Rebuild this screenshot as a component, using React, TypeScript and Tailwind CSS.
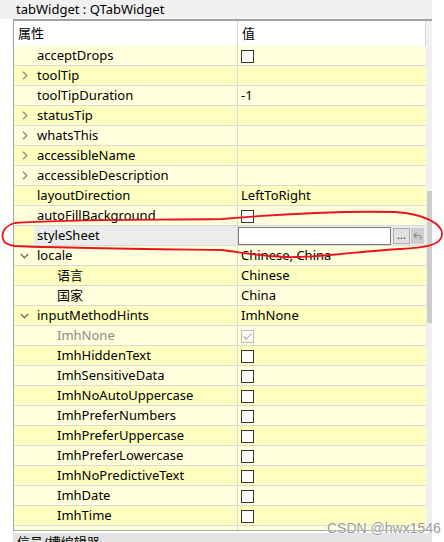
import React from "react";

type Row = {
  name: string;
  depth: number;
  arrow?: "right" | "down";
  value?: string;
  check?: "empty" | "disabled";
  special?: "style";
  muted?: boolean;
};

const rows: Row[] = [
  { name: "acceptDrops", depth: 0, check: "empty" },
  { name: "toolTip", depth: 0, arrow: "right" },
  { name: "toolTipDuration", depth: 0, value: "-1" },
  { name: "statusTip", depth: 0, arrow: "right" },
  { name: "whatsThis", depth: 0, arrow: "right" },
  { name: "accessibleName", depth: 0, arrow: "right" },
  { name: "accessibleDescription", depth: 0, arrow: "right" },
  { name: "layoutDirection", depth: 0, value: "LeftToRight" },
  { name: "autoFillBackground", depth: 0, check: "empty" },
  { name: "styleSheet", depth: 0, special: "style" },
  { name: "locale", depth: 0, arrow: "down", value: "Chinese, China" },
  { name: "语言", depth: 1, value: "Chinese" },
  { name: "国家", depth: 1, value: "China" },
  { name: "inputMethodHints", depth: 0, arrow: "down", value: "ImhNone" },
  { name: "ImhNone", depth: 1, check: "disabled", muted: true },
  { name: "ImhHiddenText", depth: 1, check: "empty" },
  { name: "ImhSensitiveData", depth: 1, check: "empty" },
  { name: "ImhNoAutoUppercase", depth: 1, check: "empty" },
  { name: "ImhPreferNumbers", depth: 1, check: "empty" },
  { name: "ImhPreferUppercase", depth: 1, check: "empty" },
  { name: "ImhPreferLowercase", depth: 1, check: "empty" },
  { name: "ImhNoPredictiveText", depth: 1, check: "empty" },
  { name: "ImhDate", depth: 1, check: "empty" },
  { name: "ImhTime", depth: 1, check: "empty" },
];

function Chevron({ dir }: { dir: "right" | "down" }) {
  if (dir === "right") {
    return (
      <svg width="6" height="9" viewBox="0 0 6 9" className="block">
        <path d="M1 0.8 L4.8 4.5 L1 8.2" fill="none" stroke="#8a8a8a" strokeWidth="1.3" />
      </svg>
    );
  }
  return (
    <svg width="9" height="6" viewBox="0 0 9 6" className="block">
      <path d="M0.8 1 L4.5 4.8 L8.2 1" fill="none" stroke="#6e6e6e" strokeWidth="1.3" />
    </svg>
  );
}

function CheckBox({ kind }: { kind: "empty" | "disabled" }) {
  if (kind === "disabled") {
    return (
      <div className="w-[13px] h-[13px] border border-[#bcbcbc] bg-[#fdfdf4] flex items-center justify-center">
        <svg width="11" height="11" viewBox="0 0 11 11">
          <path d="M1.5 5.5 L4.3 8.3 L9.5 2.5" fill="none" stroke="#a8a8a8" strokeWidth="1.1" />
        </svg>
      </div>
    );
  }
  return <div className="w-[13px] h-[13px] border border-[#333333] bg-white" />;
}

function PropRow({ row, index }: { row: Row; index: number }) {
  const bg = index % 2 === 0 ? "bg-[#ffffdc]" : "bg-[#ffffbf]";
  const isStyle = row.special === "style";
  return (
    <div className={`flex h-[20px] border-b border-[#d9d9d9] ${bg}`}>
      {/* name column */}
      <div className="flex w-[224px] h-full border-r border-[#d9d9d9]">
        {row.depth > 0 && <div className="w-[20px] shrink-0" />}
        <div className="w-[20px] shrink-0 flex items-center justify-center pl-[1px]">
          {row.arrow && <Chevron dir={row.arrow} />}
        </div>
        <div
          className={`flex-1 flex items-center pl-[3px] text-[13px] ${
            isStyle ? "bg-[#ececec]" : ""
          } ${row.muted ? "text-[#8c8c8c]" : "text-[#000000]"}`}
        >
          {row.name}
        </div>
      </div>
      {/* value column */}
      <div className={`flex-1 flex items-center h-full ${isStyle ? "bg-[#ececec]" : ""}`}>
        {isStyle ? (
          <div className="flex items-center h-full w-full">
            <div className="w-[153px] h-[18px] bg-white border border-[#7a7a7a]" />
            <div className="ml-[2px] w-[17px] h-[16px] bg-[#e1e1e1] border border-[#adadad] flex items-end justify-center text-[11px] leading-[12px] pb-[2px] text-[#222]">
              ...
            </div>
            <div className="ml-[1px] w-[13px] h-[16px] bg-[#cfcfcf] flex items-center justify-center">
              <svg width="9" height="8" viewBox="0 0 9 8">
                <path d="M3.5 1 L1 3.5 L3.5 6" fill="none" stroke="#8a8a8a" strokeWidth="1.2" />
                <path d="M1.2 3.5 H5.5 Q8 3.5 8 6 V7.5" fill="none" stroke="#8a8a8a" strokeWidth="1.2" />
              </svg>
            </div>
          </div>
        ) : row.check ? (
          <div className="pl-[3px] pt-[2px]">
            <CheckBox kind={row.check} />
          </div>
        ) : (
          <span className="pl-[3px] text-[13px] text-black">{row.value}</span>
        )}
      </div>
    </div>
  );
}

export default function App() {
  return (
    <div className="relative w-[444px] h-[542px] overflow-hidden bg-white font-['Noto_Sans','Noto_Sans_CJK_SC',sans-serif]">
      {/* title bar */}
      <div className="w-[432px] h-[19px] bg-[#f0f0f0] pl-[16px] text-[13px] leading-[19px] text-black">
        tabWidget : QTabWidget
      </div>
      {/* table frame */}
      <div className="flex">
        <div className="w-[13px] shrink-0" />
        <div className="w-[419px] h-[512px] border-l border-t-2 border-b border-[#a3a3a3] flex overflow-hidden">
          <div className="w-[413px] flex flex-col">
            {/* header */}
            <div className="flex h-[25px] bg-white border-r border-[#d4d4d4]">
              <div className="w-[224px] border-r border-[#dadada] pl-[4px] flex items-center text-[13px]">
                属性
              </div>
              <div className="flex-1 pl-[4px] flex items-center text-[13px]">值</div>
            </div>
            {rows.map((r, i) => (
              <PropRow key={r.name} row={r} index={i} />
            ))}
            <div className="flex-1 bg-[#ffffdc] flex">
              <div className="w-[224px] border-r border-[#d9d9d9]" />
            </div>
          </div>
          {/* scrollbar */}
          <div className="w-[6px] bg-[#f0f0f0] flex flex-col">
            <div className="h-[170px]" />
            <div className="h-[132px] bg-[#cdcdcd] ml-[1px]" />
          </div>
        </div>
      </div>
      {/* bottom dock title */}
      <div className="flex mt-[2px]">
        <div className="w-[13px] shrink-0" />
        <div className="w-[419px] h-[9px] bg-[#e3e3e3] overflow-hidden pl-[4px] text-[13px] leading-[19px] text-black">
          信号/槽编辑器
        </div>
      </div>
      {/* watermark */}
      <div className="absolute left-[327px] top-[518px] text-[14px] font-['Liberation_Sans',sans-serif] text-[#9a9a9a] [text-shadow:0_0_2px_#ffffff,0_0_1px_#ffffff]">
        CSDN @hwx1546
      </div>
      {/* red hand-drawn loop */}
      <svg className="absolute left-0 top-0 pointer-events-none" width="444" height="542" viewBox="0 0 444 542">
        <path
          d="M4 241 C0 234, 4 226, 15 223 C60 219, 150 220, 222 219 C280 214, 350 211, 395 212 C425 214, 443 224, 442 235 C441 245, 425 248, 400 249 C360 251, 320 258, 285 257 C255 256, 240 252, 222 250 C150 249, 60 248, 15 246 C9 245, 5 243, 4 241"
          fill="none"
          stroke="#e8141c"
          strokeWidth="1.8"
          strokeLinecap="round"
        />
      </svg>
    </div>
  );
}
